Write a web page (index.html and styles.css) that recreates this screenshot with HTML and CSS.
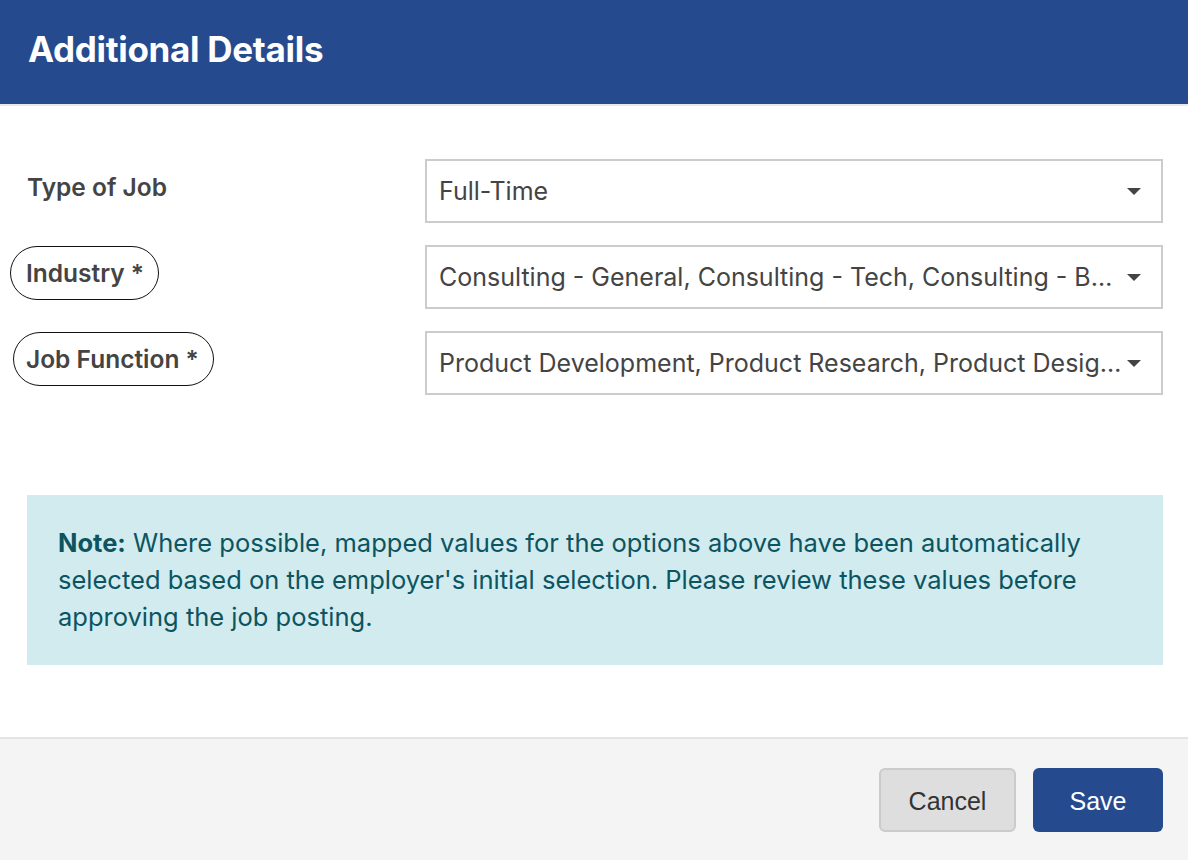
FILE: index.html
```html
<!DOCTYPE html>
<html lang="en">
<head>
    <meta charset="UTF-8">
    <title>Additional Details</title>
    <link rel="stylesheet" href="styles.css">
</head>
<body>
    <div class="modal">
        <div class="modalHeader">
            <h1 class="modalTitle">Additional Details</h1>
        </div>

        <div class="modalBody">
            <div class="fieldRow">
                <div class="fieldLabel"><span class="labelText">Type of Job</span></div>
                <div class="selectBox">
                    <span class="selectValue">Full-Time</span>
                    <span class="caret"></span>
                </div>
            </div>
            <div class="fieldRow">
                <div class="fieldLabel"><span class="labelText circled circledOne">Industry *</span></div>
                <div class="selectBox">
                    <span class="selectValue">Consulting - General, Consulting - Tech, Consulting - Business Strategy</span>
                    <span class="caret"></span>
                </div>
            </div>
            <div class="fieldRow">
                <div class="fieldLabel"><span class="labelText circled circledTwo">Job Function *</span></div>
                <div class="selectBox">
                    <span class="selectValue">Product Development, Product Research, Product Design, Product Management</span>
                    <span class="caret"></span>
                </div>
            </div>

            <div class="noteBox">
                <strong>Note:</strong> Where possible, mapped values for the options above have been automatically selected based on the employer's initial selection. Please review these values before approving the job posting.
            </div>
        </div>

        <div class="modalFooter">
            <button class="btn btnCancel">Cancel</button>
            <button class="btn btnSave">Save</button>
        </div>
    </div>
</body>
</html>
```

FILE: styles.css
```css
/* Modal layout */
body {
  margin: 0;
  padding: 0;
  font-family: Inter, "Noto Sans", sans-serif;
  background: #fff;
}

.modal {
  width: 1188px;
  height: 860px;
  display: flex;
  flex-direction: column;
}

.modalHeader {
  background-color: #254b8e;
  height: 104px;
  border-bottom: 2px solid #e8e8e8;
  padding: 0 28px;
  display: flex;
  align-items: center;
}

.modalTitle {
  margin: 0 0 6px 0;
  color: #fff;
  font-size: 35px;
  font-weight: 700;
  letter-spacing: -0.3px;
}

.modalBody {
  flex: 1;
  padding: 53px 25px 0 27px;
}

.fieldRow {
  display: flex;
  align-items: center;
  margin-bottom: 22px;
}

.fieldLabel {
  width: 398px;
  flex-shrink: 0;
}

.labelText {
  display: inline-block;
  color: #444;
  font-size: 24.5px;
  font-weight: 600;
  line-height: 30px;
  margin-top: -8px;
}

.circled {
  border: 1.5px solid #111;
  border-radius: 30px;
  padding: 11px 14px 11px 15px;
}

.circledOne {
  margin-left: -17px;
}

.circledTwo {
  margin-left: -14px;
  padding-left: 12px;
}

.selectBox {
  flex: 1;
  height: 60px;
  border: 2px solid #ccc;
  display: flex;
  align-items: center;
  padding: 0 20px 0 12px;
  min-width: 0;
}

.selectValue {
  flex: 1;
  min-width: 0;
  white-space: nowrap;
  overflow: hidden;
  text-overflow: ellipsis;
  color: #444;
  font-size: 25px;
}

.caret {
  width: 0;
  height: 0;
  margin-left: 4px;
  border-left: 7px solid transparent;
  border-right: 7px solid transparent;
  border-top: 7px solid #444;
}

.noteBox {
  margin-top: 100px;
  background-color: #d1ebef;
  color: #0c5460;
  font-size: 25.5px;
  line-height: 37px;
  padding: 29px 31px 30px 31px;
}

.noteBox strong {
  font-weight: 700;
}

.modalFooter {
  height: 121px;
  background-color: #f4f4f4;
  border-top: 2px solid #e4e4e4;
  display: flex;
  align-items: center;
  justify-content: flex-end;
  gap: 17px;
  padding: 0 25px 0 0;
}

.btn {
  height: 64px;
  border-radius: 6px;
  font-family: "Liberation Sans", Arial, sans-serif;
  font-size: 25px;
  padding-top: 4px;
  cursor: pointer;
}

.btnCancel {
  width: 137px;
  background-color: #dedede;
  border: 2px solid #cbcbcb;
  color: #333;
}

.btnSave {
  width: 130px;
  background-color: #254b8e;
  border: none;
  color: #fff;
}
```
